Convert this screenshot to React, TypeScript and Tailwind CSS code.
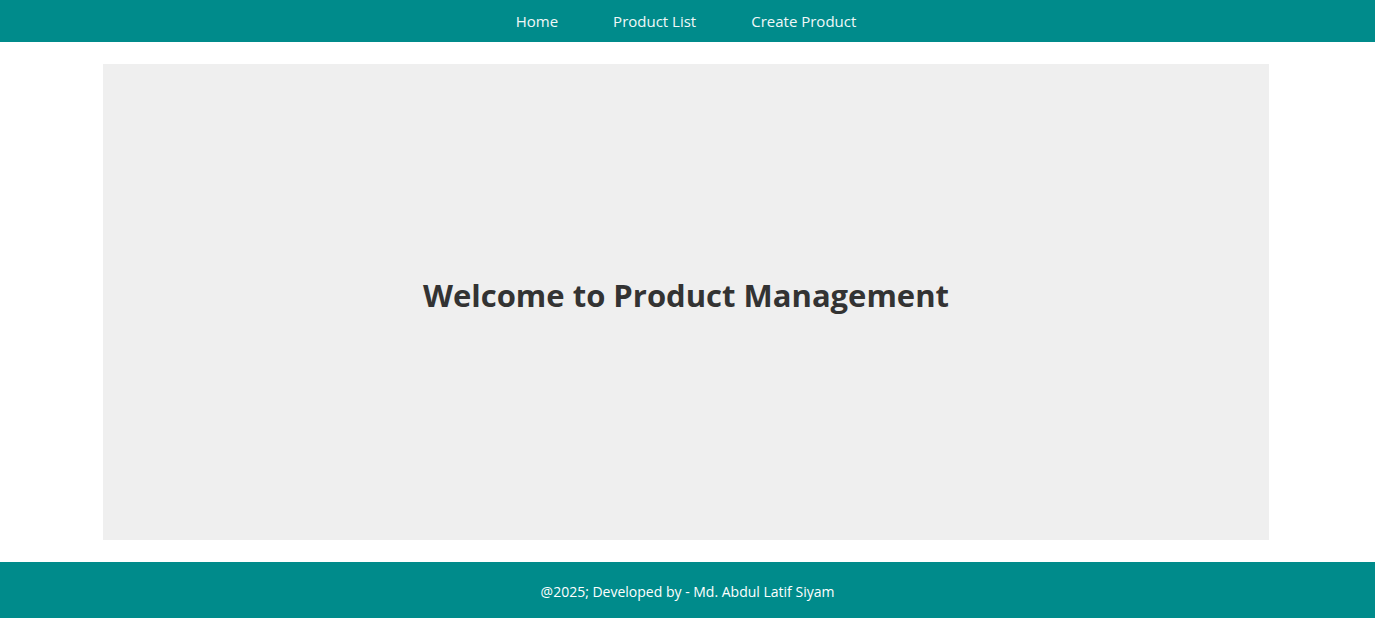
export default function App() {
  return (
    <div
      className="min-h-screen flex flex-col bg-white"
      style={{ fontFamily: '"Open Sans", "Noto Sans", sans-serif' }}
    >
      <header className="h-[42px] bg-[#008b8b] flex items-center justify-center gap-[55px] pr-[3px] text-[15px] text-[#f0f8f8]">
        <a href="#">Home</a>
        <a href="#">Product List</a>
        <a href="#">Create Product</a>
      </header>

      <main className="flex-1 py-[22px]">
        <div className="w-[1166px] h-[476px] ml-[103px] bg-[#efefef] flex items-center justify-center">
          <h1 className="mb-[14px] text-[31px] font-bold text-[#333333]">
            Welcome to Product Management
          </h1>
        </div>
      </main>

      <footer className="h-[56px] pt-[3px] bg-[#008b8b] flex items-center justify-center text-[14px] text-white">
        @2025; Developed by - Md. Abdul Latif Siyam
      </footer>
    </div>
  );
}
